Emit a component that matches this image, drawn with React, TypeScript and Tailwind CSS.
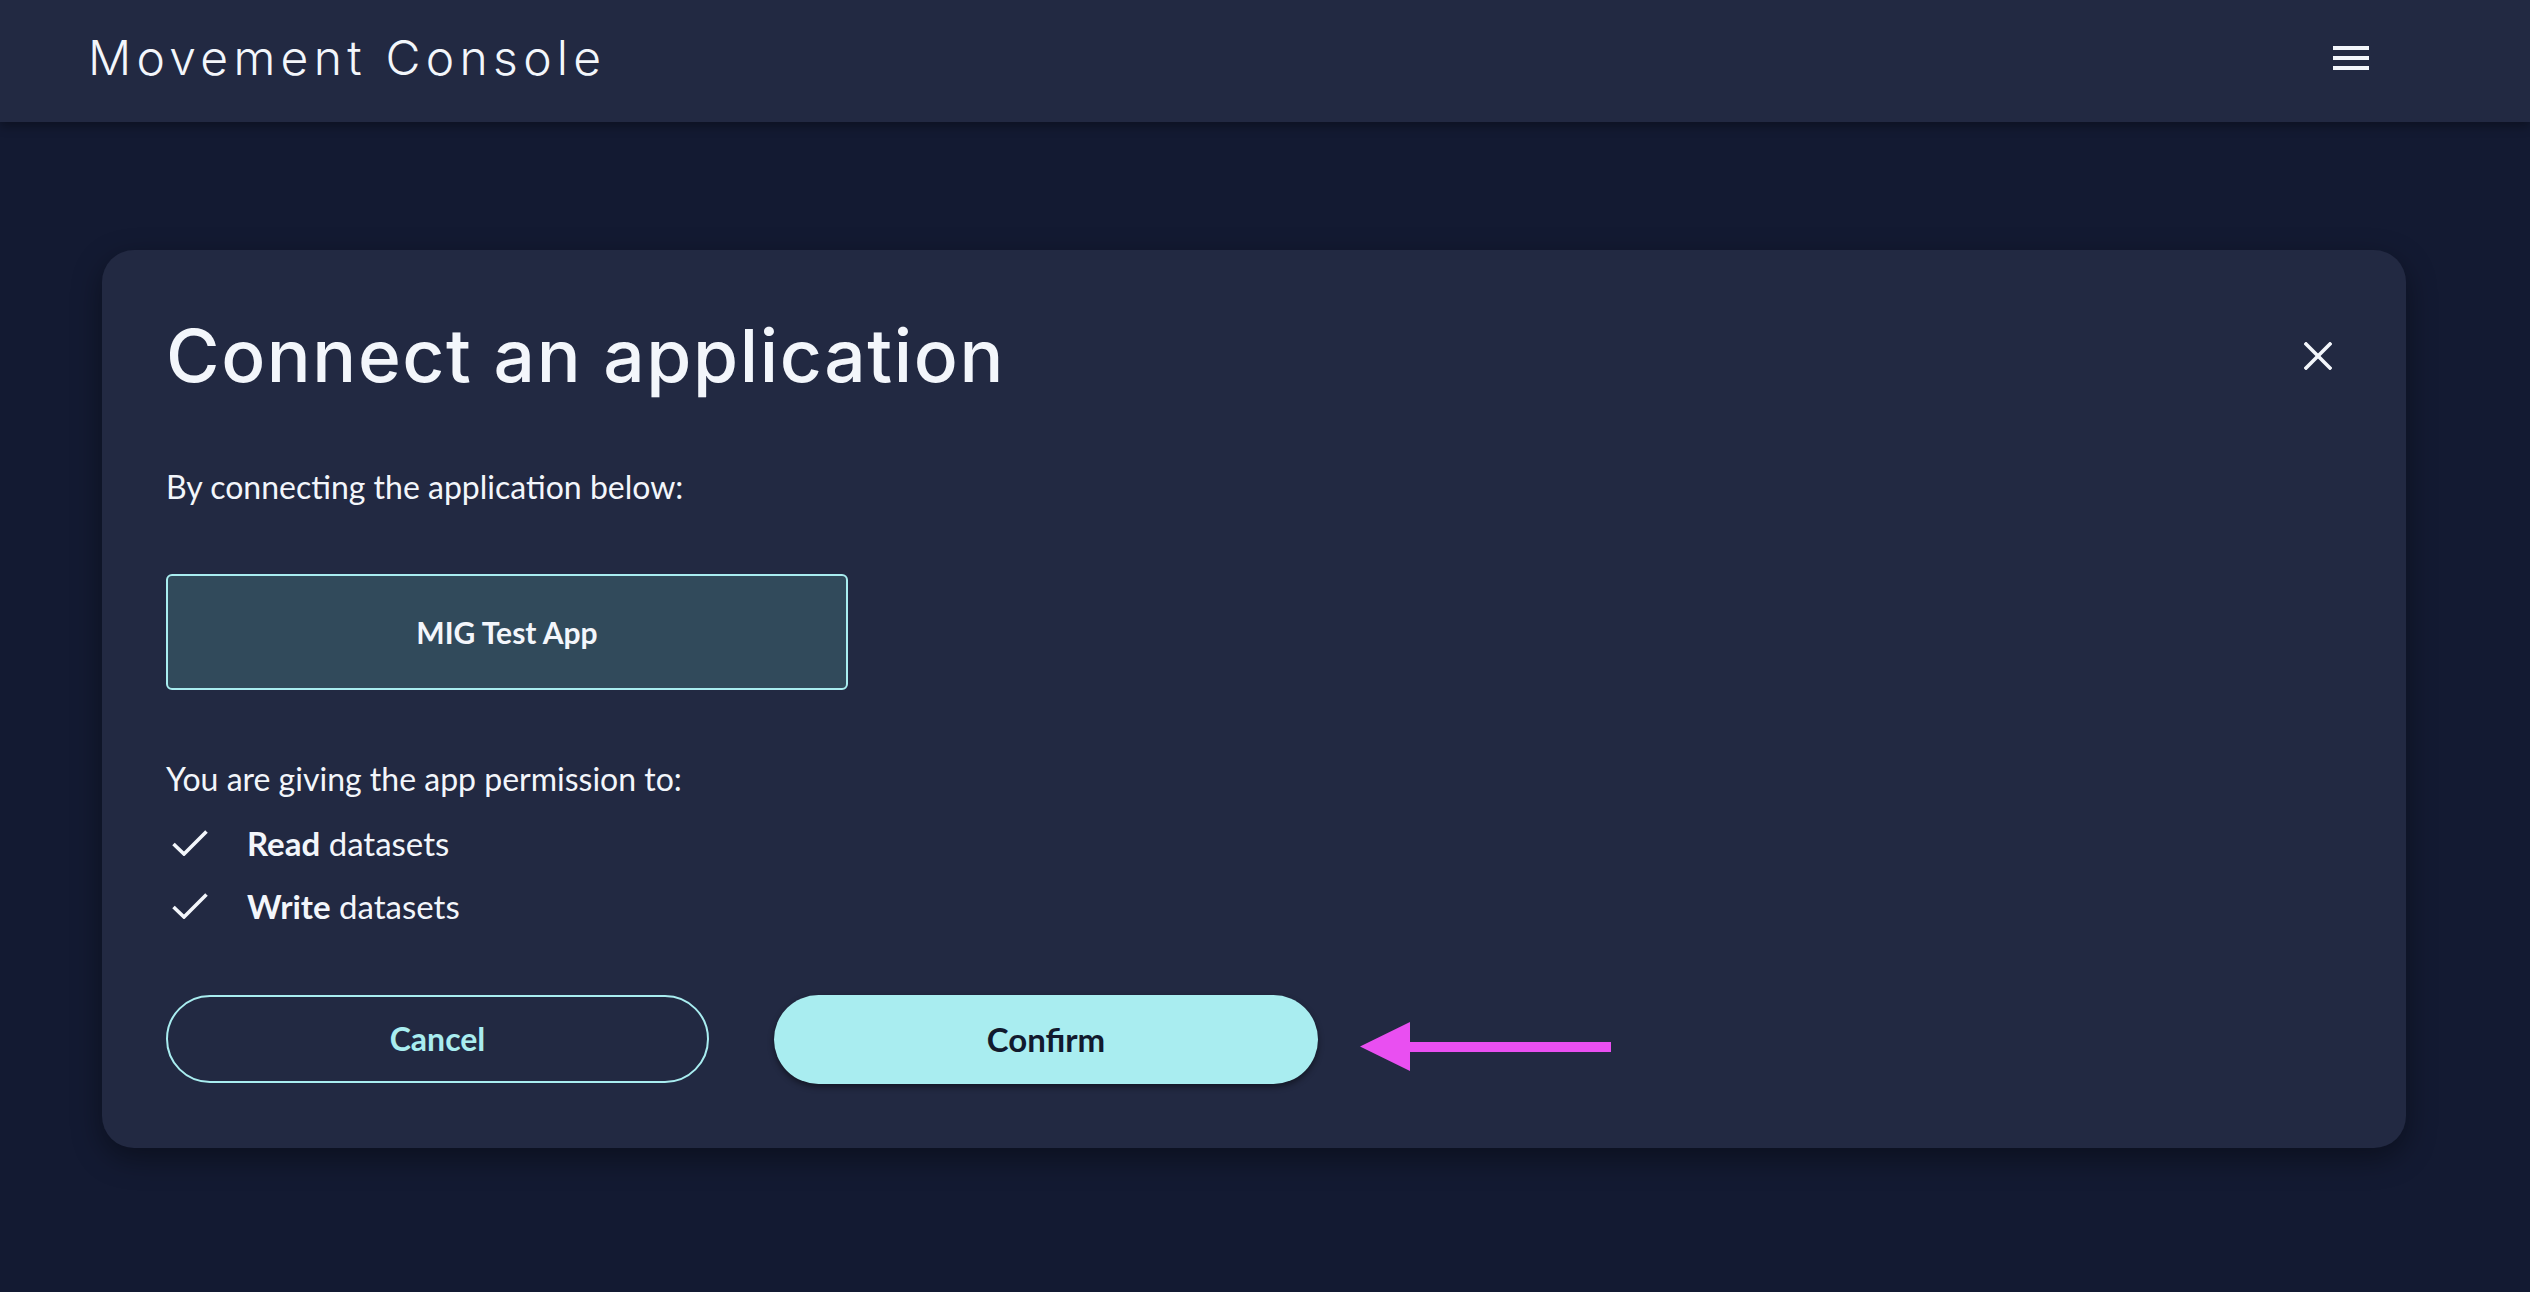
import React from "react";

export default function App() {
  return (
    <div className="min-h-[1292px] bg-[#131a32] font-['Lato','Noto_Sans',sans-serif] text-[#f3f6fb]">
      <header className="h-[122px] bg-[#222942] shadow-[0_4px_10px_rgba(0,0,0,0.35)] flex items-center justify-between pl-[88px] pr-[161px] pb-[6px] relative z-10">
        <div className="font-['Inter',sans-serif] font-light text-[48px] tracking-[0.11em] leading-none text-[#f3f6fb]">
          Movement Console
        </div>
        <button className="flex flex-col gap-[6px] w-[36px]">
          <span className="block h-[4px] w-[36px] bg-[#f3f6fb]" />
          <span className="block h-[4px] w-[36px] bg-[#f3f6fb]" />
          <span className="block h-[4px] w-[36px] bg-[#f3f6fb]" />
        </button>
      </header>

      <main className="pt-[128px] pl-[102px] pr-[124px]">
        <section className="rounded-[32px] bg-[#222942] p-16 shadow-[0_10px_30px_rgba(0,0,0,0.4)]">
          <div className="flex items-center justify-between">
            <h1 className="font-['Inter',sans-serif] font-medium text-[73px] leading-[84px] tracking-[0.022em] text-[#f3f6fb]">
              Connect an application
            </h1>
            <button className="w-[48px] h-[48px] flex items-center justify-center">
              <svg width="28" height="28" viewBox="0 0 28 28" fill="none" stroke="#f3f6fb" strokeWidth="3.6" strokeLinecap="square">
                <line x1="2" y1="2" x2="26" y2="26" />
                <line x1="26" y1="2" x2="2" y2="26" />
              </svg>
            </button>
          </div>

          <p className="mt-[70px] text-[32px] leading-[38px]">By connecting the application below:</p>

          <div className="mt-[68px] w-[682px] h-[116px] rounded-[6px] border-2 border-[#a9edf0] bg-[#314a5b] flex items-center justify-center">
            <span className="text-[30px] font-bold text-[#f3f6fb]">MIG Test App</span>
          </div>

          <p className="mt-[70px] text-[32px] leading-[38px]">You are giving the app permission to:</p>

          <ul className="mt-[26px] flex flex-col gap-[25px]">
            {[
              ["Read", "datasets"],
              ["Write", "datasets"],
            ].map(([b, r]) => (
              <li key={b} className="flex items-center h-[38px]">
                <span className="w-[81px] shrink-0 pl-[6px] flex items-center">
                  <svg width="36" height="26" viewBox="0 0 36 26" fill="none" stroke="#f3f6fb" strokeWidth="3.6" strokeLinecap="butt" strokeLinejoin="miter">
                    <polyline points="1.5,14 12,24 34.5,1.5" />
                  </svg>
                </span>
                <span className="text-[33px] leading-[38px]">
                  <span className="font-bold">{b}</span> {r}
                </span>
              </li>
            ))}
          </ul>

          <div className="mt-[70px] flex items-start">
            <button className="w-[543px] h-[88px] rounded-full border-2 border-[#a9edf0] text-[#a9edf0] text-[32px] font-bold">
              Cancel
            </button>
            <button className="ml-[65px] w-[544px] h-[89px] rounded-full bg-[#a9edf0] text-[#121a2e] text-[33px] font-bold shadow-[0_3px_6px_rgba(0,0,0,0.45)]">
              Confirm
            </button>
            <svg className="ml-[42px] mt-[27px]" width="251" height="49" viewBox="0 0 251 49">
              <polygon points="0,24.5 50,0 50,20 251,20 251,30 50,30 50,49" fill="#e94ff1" />
            </svg>
          </div>
        </section>
      </main>
    </div>
  );
}
